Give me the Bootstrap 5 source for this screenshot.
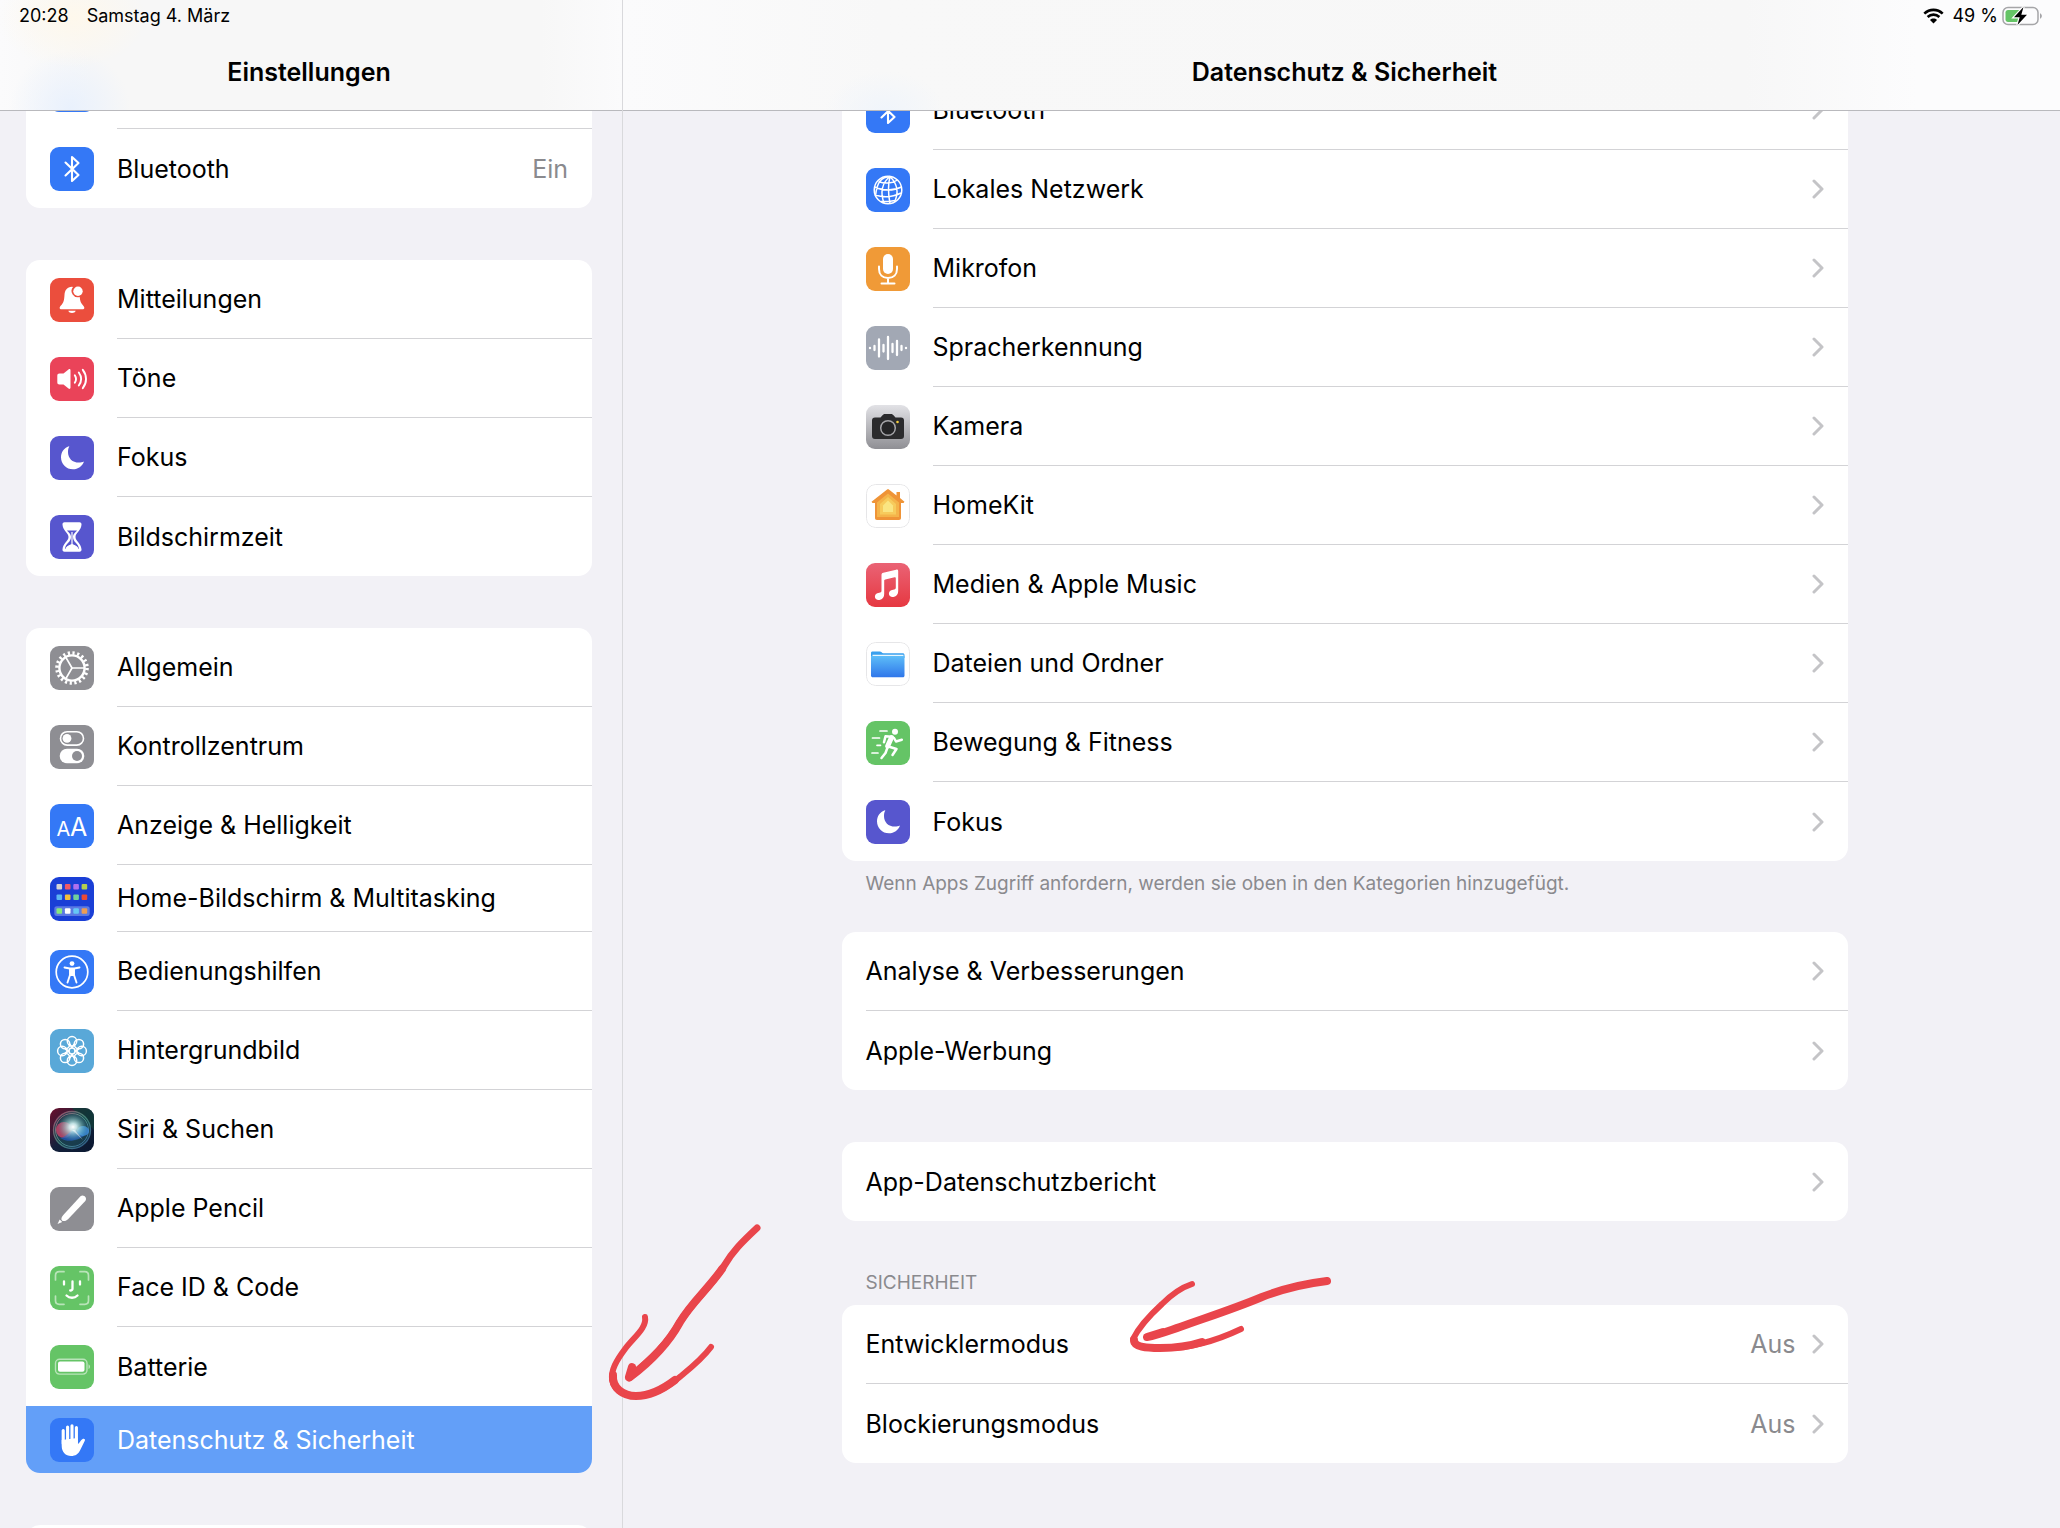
<!DOCTYPE html>
<html lang="de">
<head>
<meta charset="utf-8">
<meta name="viewport" content="width=device-width, initial-scale=1">
<title>Einstellungen – Datenschutz &amp; Sicherheit</title>
<link href="https://cdn.jsdelivr.net/npm/bootstrap@5.3.0/dist/css/bootstrap.min.css" rel="stylesheet">
<style>
  :root { --pane: #f2f1f6; --line: #d3d3d6; --muted: #8a8a8e; }
  body { font-family: Inter, "Liberation Sans", sans-serif; font-size: 25px; line-height: 32px; color: #000; background: var(--pane); }
  .app { min-height: 100vh; height: 100vh; }
  .sidebar { flex: 0 0 623px; border-right: 1px solid #d9d9dc; }
  .topbar { height: 111px; border-bottom: 1px solid #b9b9bd; flex: none; }
  .topbar h1 { font-size: 25px; line-height: 32px; font-weight: 600; margin: 0; }
  .status { height: 32px; font-size: 18px; line-height: 24px; }
  .bar-side {
    padding: 0 30px 0 26px;
    background:
      radial-gradient(ellipse 75px 50px at 72px 18px, #fef8ec, transparent),
      radial-gradient(ellipse 60px 58px at 70px 108px, #e9f1fd, transparent),
      linear-gradient(90deg, #fbfbfc, #f7f7f7 90px, #f7f7f7 540px, #fbfbfc);
  }
  .bar-side .status { margin-left: -7px; gap: 18px; }
  .bar-detail {
    padding-left: 6px;
    background:
      radial-gradient(ellipse 60px 40px at 262px 111px, #f0f5fb, transparent),
      linear-gradient(90deg, #fbfbfc, #f8f8f8 18%, #f7f7f7 78%, #fcfcfd 90%);
  }
  .bar-detail .status { padding-right: 17px; }
  .scroller { overflow: hidden; min-height: 0; }
  .side-list { margin-top: -61px; padding: 0 30px 0 26px; }
  .detail-list { margin-top: -40px; padding-left: 6px; }
  .detail-list > div { width: 100%; max-width: 1006px; }
  .settings-group { border-radius: 14px; overflow: hidden; background: #fff; margin-bottom: 52px; }
  .entry { display: flex; align-items: stretch; height: 79px; padding-left: 24px; color: #000; text-decoration: none; }
  .entry.short { height: 67px; }
  .entry > svg { width: 44px; height: 44px; border-radius: 9px; flex: none; align-self: center; margin-right: 23px; }
  .entry-body { flex: 1; display: flex; align-items: center; padding-right: 24px; border-bottom: 1px solid var(--line); min-width: 0; }
  .entry:last-child .entry-body { border-bottom: 0; }
  .no-line .entry-body { border-bottom: 0; }
  .entry-value { margin-left: auto; color: var(--muted); }
  .chev { width: 12px; height: 20px; flex: none; margin-left: auto; fill: none; stroke: #c4c4c7; stroke-width: 3; stroke-linecap: round; stroke-linejoin: round; }
  .entry-value + .chev { margin-left: 16px; }
  .entry.current { background: #639ff8; color: #fff; }
  .note { color: var(--muted); font-size: 19px; line-height: 24px; padding-left: 24px; margin: 0; }
  .after-group { margin-top: -41px; margin-bottom: 36px; }
  .group-title { margin-top: -2px; margin-bottom: 10px; }
  .ink { position: absolute; fill: none; stroke: #e9454b; stroke-linecap: round; stroke-linejoin: round; pointer-events: none; }
  .ink-side { left: 600px; top: 1215px; }
  .ink-detail { left: 1120px; top: 1265px; }
</style>
<script src="https://cdn.jsdelivr.net/npm/bootstrap@5.3.0/dist/js/bootstrap.bundle.min.js"></script>
</head>
<body>
<svg width="0" height="0" class="position-absolute" aria-hidden="true">
  <defs>
    <linearGradient id="gCam" x1="0" y1="0" x2="0" y2="1"><stop offset="0" stop-color="#e2e2e6"/><stop offset="1" stop-color="#8f8f94"/></linearGradient>
    <linearGradient id="gMusic" x1="0" y1="0" x2="0" y2="1"><stop offset="0" stop-color="#ea6375"/><stop offset="1" stop-color="#e63841"/></linearGradient>
    <linearGradient id="gFolder" x1="0" y1="0" x2="0" y2="1"><stop offset="0" stop-color="#5dbdf8"/><stop offset="1" stop-color="#2f76ea"/></linearGradient>
    <linearGradient id="gSiriBg" x1="0" y1="0" x2="1" y2="1"><stop offset="0" stop-color="#6d0f2c"/><stop offset=".5" stop-color="#14213c"/><stop offset="1" stop-color="#0a1830"/></linearGradient>
    <linearGradient id="gSiriRing" x1="0" y1="0" x2="1" y2="1"><stop offset="0" stop-color="#c7577b"/><stop offset=".5" stop-color="#5aa893"/><stop offset="1" stop-color="#3a70b8"/></linearGradient>
    <radialGradient id="gSiriGlow"><stop offset="0" stop-color="#fff"/><stop offset=".25" stop-color="#d4f4f4" stop-opacity=".9"/><stop offset="1" stop-color="#4fb9b0" stop-opacity="0"/></radialGradient>
    <symbol id="chev" viewBox="0 0 12 20"><path d="M2 2l8 8-8 8"/></symbol>
    <symbol id="bt" viewBox="0 0 44 44"><rect width="44" height="44" fill="#3478f6"/><path d="M15.500 15.500L28.500 28l-6.500 6V10l6.500 6-13 12.500" fill="none" stroke="#fff" stroke-width="2.100" stroke-linejoin="round" stroke-linecap="round"/></symbol>
    <symbol id="moon" viewBox="0 0 44 44"><rect width="44" height="44" fill="#5756ce"/><path d="M19 10.200C13.800 11.800 11 16.300 11 21.200 11 27.800 16.200 33.300 23 33.300c5 0 9.300-3 11-7.800-1.500.800-3.300 1.100-5 1.100-6.700 0-11-4.300-11-10.600 0-2.200.300-4.200 1.300-5.600z" fill="#fff"/></symbol>
  </defs>
</svg>

<div class="app d-flex position-relative overflow-hidden">

  <nav class="sidebar d-flex flex-column" aria-label="Einstellungen">
    <header class="topbar bar-side">
      <div class="status d-flex align-items-center"><span>20:28</span><span>Samstag 4. März</span></div>
      <h1 class="text-center mt-4">Einstellungen</h1>
    </header>
    <div class="scroller flex-grow-1">
      <div class="side-list">
        <div class="settings-group">
          <a class="entry" href="#" aria-label="WLAN"><svg viewBox="0 0 44 44"><rect width="44" height="44" fill="#3478f6"/></svg><span class="entry-body"></span></a>
          <a class="entry" href="#"><svg><use href="#bt"/></svg><span class="entry-body">Bluetooth<span class="entry-value">Ein</span></span></a>
        </div>

        <div class="settings-group">
          <a class="entry" href="#"><svg viewBox="0 0 44 44"><rect width="44" height="44" fill="#eb4e3d"/><path d="M22 8.700c-5 0-7.200 3.800-7.500 8-.4 5.800-.8 8-3.800 11-1.700 1.800-1.200 3.600.8 3.600h21c2 0 2.500-1.800.8-3.600-2.500-2.500-3.200-4.700-3.600-8.700A6.300 6.300 0 0 1 23 9z" fill="#fff"/><circle cx="28" cy="13.300" r="4.700" fill="#fff"/><path d="M18.300 32.700h7.400c-.8 3-6.600 3-7.400 0z" fill="#fff"/></svg><span class="entry-body">Mitteilungen</span></a>
          <a class="entry" href="#"><svg viewBox="0 0 44 44"><rect width="44" height="44" fill="#ea4359"/><path d="M9.500 16.500h4l5-4c1-.8 2-.3 2 1v17c0 1.300-1 1.800-2 1l-5-4h-4c-1.500 0-2.200-.8-2.200-2.200v-6.600c0-1.400.7-2.200 2.200-2.200z" fill="#fff"/><path d="M24.800 18.200c1.500 2.300 1.500 5.300 0 7.600M28.800 15.500c2.900 4 2.900 9 0 13M32.800 12.800c4.300 5.600 4.300 12.800 0 18.400" fill="none" stroke="#fff" stroke-width="1.900" stroke-linecap="round"/></svg><span class="entry-body">Töne</span></a>
          <a class="entry" href="#"><svg><use href="#moon"/></svg><span class="entry-body">Fokus</span></a>
          <a class="entry" href="#"><svg viewBox="0 0 44 44"><rect width="44" height="44" fill="#5756ce"/><path d="M14.500 7.300h15c1.400 0 2.200 1 2 2.500-.6 6.200-6 8.200-6 12.200s5.400 6 6 12.200c.2 1.500-.6 2.500-2 2.500h-15c-1.400 0-2.200-1-2-2.500.6-6.200 6-8.200 6-12.200s-5.400-6-6-12.200c-.2-1.500.6-2.500 2-2.500z" fill="#fff"/><path d="M17 15.500h10c-1.300 1.700-4 3.200-4 6.500 0 5.500 5.500 6 6 12H15c.5-6 6-6.500 6-12 0-3.300-2.700-4.800-4-6.500z" fill="#5756ce"/><path d="M22 17v15M16 34c.8-3 4-3.800 6-4.500 2 .7 5.200 1.500 6 4.500z" fill="#fff" stroke="#fff" stroke-width="1.200"/></svg><span class="entry-body">Bildschirmzeit</span></a>
        </div>

        <div class="settings-group">
          <a class="entry" href="#"><svg viewBox="0 0 44 44"><rect width="44" height="44" fill="#8e8e93"/><g fill="none" stroke="#fff"><circle cx="22" cy="22" r="12.600" stroke-width="2.400"/><circle cx="22" cy="22" r="15" stroke-width="3.600" stroke-dasharray="2.200 2.512"/><path d="M22 22h12M22 22l-6-10.400M22 22l-6 10.400" stroke-width="1.700"/></g></svg><span class="entry-body">Allgemein</span></a>
          <a class="entry" href="#"><svg viewBox="0 0 44 44"><rect width="44" height="44" fill="#8e8e93"/><rect x="10.500" y="6.700" width="23" height="13.400" rx="6.700" fill="none" stroke="#fff" stroke-width="1.600"/><circle cx="17" cy="13.400" r="4.400" fill="#fff"/><rect x="9.700" y="23.700" width="24.600" height="14.600" rx="7.300" fill="#fff"/><circle cx="27" cy="31" r="5" fill="#8e8e93"/></svg><span class="entry-body">Kontrollzentrum</span></a>
          <a class="entry" href="#"><svg viewBox="0 0 44 44"><rect width="44" height="44" fill="#3478f6"/><text x="6.500" y="31.500" font-size="20" fill="#fff">A</text><text x="20" y="31.500" font-size="25" fill="#fff">A</text></svg><span class="entry-body">Anzeige &amp; Helligkeit</span></a>
          <a class="entry short" href="#"><svg viewBox="0 0 44 44"><rect width="44" height="44" fill="#1a3fd6"/><rect x="4.300" y="29.300" width="35.400" height="9.600" rx="2.500" fill="#5b79e3"/><g><rect x="6.500" y="7" width="5.600" height="5.600" rx="1" fill="#d5d5d5"/><rect x="14.900" y="7" width="5.600" height="5.600" rx="1" fill="#ef5a66"/><rect x="23.300" y="7" width="5.600" height="5.600" rx="1" fill="#b070ee"/><rect x="31.600" y="7" width="5.600" height="5.600" rx="1" fill="#b5cf4f"/><rect x="6.500" y="17.500" width="5.600" height="5.600" rx="1" fill="#5cb6f2"/><rect x="14.900" y="17.500" width="5.600" height="5.600" rx="1" fill="#f3bf3c"/><rect x="23.300" y="17.500" width="5.600" height="5.600" rx="1" fill="#6fd09c"/><rect x="31.600" y="17.500" width="5.600" height="5.600" rx="1" fill="#ea4a36"/><rect x="6.500" y="31.200" width="5.600" height="5.600" rx="1" fill="#86e87e"/><rect x="14.900" y="31.200" width="5.600" height="5.600" rx="1" fill="#fff"/><rect x="23.300" y="31.200" width="5.600" height="5.600" rx="1" fill="#66c7f5"/><rect x="31.600" y="31.200" width="5.600" height="5.600" rx="1" fill="#ee9c52"/></g></svg><span class="entry-body">Home-Bildschirm &amp; Multitasking</span></a>
          <a class="entry" href="#"><svg viewBox="0 0 44 44"><rect width="44" height="44" fill="#3478f6"/><circle cx="22" cy="22" r="15.800" fill="none" stroke="#fff" stroke-width="1.700"/><circle cx="22" cy="13.600" r="2.400" fill="#fff"/><path d="M14.500 17.500l5.200 1h4.600l5.200-1M20 18.500v6.500l-2.500 7.500M24 18.500v6.500l2.500 7.500" fill="none" stroke="#fff" stroke-width="1.900" stroke-linecap="round" stroke-linejoin="round"/><path d="M19.500 18h5v8h-5z" fill="#fff"/></svg><span class="entry-body">Bedienungshilfen</span></a>
          <a class="entry" href="#"><svg viewBox="0 0 44 44"><rect width="44" height="44" fill="#59a8d8"/><g fill="none" stroke="#fff" stroke-width="1.500"><circle cx="22" cy="12.300" r="4.700"/><circle cx="28.900" cy="15.100" r="4.700"/><circle cx="31.700" cy="22" r="4.700"/><circle cx="28.900" cy="28.900" r="4.700"/><circle cx="22" cy="31.700" r="4.700"/><circle cx="15.100" cy="28.900" r="4.700"/><circle cx="12.300" cy="22" r="4.700"/><circle cx="15.100" cy="15.100" r="4.700"/><circle cx="22" cy="22" r="3"/><path d="M22 19l-2-4M22 19l2-4M22 25l-2 4M22 25l2 4M19 22l-4-2M19 22l-4 2M25 22l4-2M25 22l4 2"/></g></svg><span class="entry-body">Hintergrundbild</span></a>
          <a class="entry" href="#"><svg viewBox="0 0 44 44"><rect width="44" height="44" fill="url(#gSiriBg)"/><path d="M22 0h22v22z" fill="#113c38" opacity=".8"/><circle cx="22" cy="22" r="18.500" fill="#1d4a58" opacity=".7" stroke="url(#gSiriRing)" stroke-width="1.300"/><circle cx="22" cy="22" r="16.500" fill="none" stroke="url(#gSiriRing)" stroke-width=".8"/><ellipse cx="14" cy="22" rx="8" ry="8" fill="#d8446c" opacity=".75"/><path d="M10 30c5 0 9-6 13-8 5 0 8 2 11 6-5 3-14 8-24 2z" fill="#2458c0" opacity=".7"/><ellipse cx="33" cy="23" rx="6" ry="5" fill="#3f8fe0" opacity=".8"/><ellipse cx="23" cy="19" rx="15" ry="14" fill="url(#gSiriGlow)"/><path d="M22 22l11 10-8-10z" fill="#fff" opacity=".5"/></svg><span class="entry-body">Siri &amp; Suchen</span></a>
          <a class="entry" href="#"><svg viewBox="0 0 44 44"><rect width="44" height="44" fill="#8e8e93"/><path d="M30.500 9.200c3-2.200 7.200 1.500 4.800 4.700L18 32.200c-2 1.800-4.800 2.500-6 1.300-1.200-1.200-.5-3.500 1.300-5.500z" fill="#fff"/><path d="M9.700 32.500l2.500 2.600-4.700 2z" fill="#fff"/></svg><span class="entry-body">Apple Pencil</span></a>
          <a class="entry" href="#"><svg viewBox="0 0 44 44"><rect width="44" height="44" fill="#65c466"/><path d="M5.500 14V9.500c0-2.500 1.300-3.800 3.800-3.800H14M30 5.700h4.700c2.500 0 3.800 1.300 3.800 3.800V14M38.500 30v4.500c0 2.500-1.300 3.800-3.800 3.800H30M14 38.300H9.300c-2.500 0-3.800-1.300-3.800-3.800V30" fill="none" stroke="#b9e4b9" stroke-width="1.700" stroke-linecap="round"/><path d="M14 15.500v3M30 15.500v3M22.500 15.500v7c0 1.500-.8 2-2.300 2M16.500 29.500c3 3 8 3 11 0" fill="none" stroke="#fff" stroke-width="2.300" stroke-linecap="round"/></svg><span class="entry-body">Face ID &amp; Code</span></a>
          <a class="entry no-line" href="#"><svg viewBox="0 0 44 44"><rect width="44" height="44" fill="#65c466"/><rect x="5.500" y="14.300" width="31.500" height="14.800" rx="4" fill="none" stroke="#b9e4b9" stroke-width="1.400"/><rect x="8" y="16.600" width="26.500" height="10.200" rx="2" fill="#fff"/><path d="M38.500 19.300c2 .8 2 4 0 4.800z" fill="#b9e4b9"/></svg><span class="entry-body">Batterie</span></a>
          <a class="entry short current" href="#" aria-current="page"><svg viewBox="0 0 44 44"><rect width="44" height="44" fill="#3478f6"/><path d="M13.200 12.500v13M17.600 9v14M22 7.700v15M26.400 9.500v15" stroke="#fff" stroke-width="3.100" stroke-linecap="round"/><path d="M11.700 22v6c0 6 4 10 9.300 10 4.500 0 7.500-2 9.500-6.500l4.300-8.800c.7-1.600-.8-2.700-2.500-1.500-1.800 1.300-2.800 3.500-4.300 4.800L27.500 20z" fill="#fff"/></svg><span class="entry-body">Datenschutz &amp; Sicherheit</span></a>
        </div>
        <div class="settings-group mb-0"><a class="entry" href="#" aria-label="App Store"><span class="entry-body"></span></a></div>
      </div>
    </div>
  </nav>

  <main class="flex-grow-1 d-flex flex-column">
    <header class="topbar bar-detail">
      <div class="status d-flex align-items-center justify-content-end">
        <svg class="me-2" width="21" height="16" viewBox="0 0 21 16" aria-label="WLAN"><path d="M1.300 5.600c5.300-5 13.100-5 18.400 0M4.600 9c3.400-3.200 8.400-3.200 11.800 0" fill="none" stroke="#000" stroke-width="2.600"/><path d="M7 11.900c2-1.900 5-1.900 7 0L10.500 15.500z"/></svg>
        <span class="me-1">49 %</span>
        <svg width="41" height="20" viewBox="0 0 41 20" aria-label="Batterie lädt"><rect x="1" y="1.500" width="35" height="17" rx="5" fill="none" stroke="#a5a5a8" stroke-width="1.500"/><path d="M38 7.300c2.500 1 2.500 4.400 0 5.400z" fill="#a5a5a8"/><path d="M6 4h12v12H6c-1.500 0-2.500-1-2.500-2.500v-7C3.500 5 4.500 4 6 4z" fill="#65c466"/><path d="M21.500 1L12 11.300h5.700L15.500 19 25 8.700h-5.700z" fill="#000" stroke="#fff" stroke-width="2.400" paint-order="stroke"/></svg>
      </div>
      <h1 class="text-center mt-4">Datenschutz &amp; Sicherheit</h1>
    </header>
    <div class="scroller flex-grow-1">
      <div class="detail-list d-flex flex-column align-items-center">
        <div class="settings-group">
          <a class="entry" href="#"><svg><use href="#bt"/></svg><span class="entry-body">Bluetooth<svg class="chev"><use href="#chev"/></svg></span></a>
          <a class="entry" href="#"><svg viewBox="0 0 44 44"><rect width="44" height="44" fill="#3478f6"/><g fill="none" stroke="#fff" stroke-width="1.500"><circle cx="22" cy="22" r="13.800"/><path d="M24 8.500c-8 6-10 16-6 26.500M24 8.500c-2 8-2 17 0 27M24 8.500c7 7 9 16 4.500 25.500M24 8.500C16 9 11 13 9.500 28M12.500 13.500c6 2.500 14 2 19-1.500M8.500 19c8 4 19 4 27 0M9 27c8 2.500 18 2 26-2M15 33.500c5 .3 10 0 14-1"/></g></svg><span class="entry-body">Lokales Netzwerk<svg class="chev"><use href="#chev"/></svg></span></a>
          <a class="entry" href="#"><svg viewBox="0 0 44 44"><rect width="44" height="44" fill="#f09a37"/><rect x="17" y="7" width="10" height="20" rx="5" fill="#fff"/><path d="M13 19.500V22c0 5.500 3.500 9 9 9s9-3.500 9-9v-2.500M22 31v5.500M15.500 36.500h13" fill="none" stroke="#fff" stroke-width="2" stroke-linecap="round"/></svg><span class="entry-body">Mikrofon<svg class="chev"><use href="#chev"/></svg></span></a>
          <a class="entry" href="#"><svg viewBox="0 0 44 44"><rect width="44" height="44" fill="#a2a8b4"/><path d="M4 21.800v.4M8.500 20v4M13 13.500v17M17.500 19v6.500M22 11v22M26.500 18v8M31 15v14M35.500 20v4M40 21.800v.4" stroke="#fff" stroke-width="2.300" stroke-linecap="round"/></svg><span class="entry-body">Spracherkennung<svg class="chev"><use href="#chev"/></svg></span></a>
          <a class="entry" href="#"><svg viewBox="0 0 44 44"><rect width="44" height="44" fill="url(#gCam)"/><path d="M9 12.500h5.500l2.500-2.700c.6-.6 1-.8 2-.8h6c1 0 1.400.2 2 .8l2.500 2.700H35c2 0 3 1 3 3V31c0 2-1 3-3 3H9c-2 0-3-1-3-3V15.500c0-2 1-3 3-3z" fill="#2b2b2d"/><circle cx="22" cy="23" r="7.300" fill="#242426" stroke="#a3a3a7" stroke-width="1.500"/><circle cx="31.500" cy="17" r="1.300" fill="#f5ce3e"/></svg><span class="entry-body">Kamera<svg class="chev"><use href="#chev"/></svg></span></a>
          <a class="entry" href="#"><svg viewBox="0 0 44 44"><rect x=".5" y=".5" width="43" height="43" rx="9" fill="#fff" stroke="#e6e6e8"/><path d="M30.500 8h3.500v6l4.500 3.800-1 1.200H35v15c0 1.300-.7 2-2 2H11c-1.300 0-2-.7-2-2V19H6.500l-1-1.200L20.800 5.700c.8-.6 1.600-.6 2.400 0l7.300 5.700z" fill="#ef9437"/><path d="M22 9.500l11 9V33H11V18.500z" fill="#f4b44a"/><path d="M22 13l8 7v10.500H14V20z" fill="#f7cb5c"/><path d="M22 16.500l5 5V28H17v-6.500z" fill="#fae582"/></svg><span class="entry-body">HomeKit<svg class="chev"><use href="#chev"/></svg></span></a>
          <a class="entry" href="#"><svg viewBox="0 0 44 44"><rect width="44" height="44" fill="url(#gMusic)"/><path d="M15.500 12c0-1.400.5-2 1.800-2.300l12.800-3c1.400-.3 2.100.2 2.100 1.600V28c0 3.300-1.700 5.500-4.700 5.900-2.700.4-4.600-1-4.600-3.100 0-2.300 1.500-3.500 4.200-4 2-.4 2.700-.8 2.700-2.300V15.200c0-.8-.4-1.100-1.200-.9l-9.300 2.100c-.8.200-1.100.5-1.100 1.400V31c0 3.300-1.700 5.500-4.700 5.900-2.700.4-4.600-1-4.600-3.100 0-2.300 1.500-3.500 4.200-4 2-.4 2.400-.8 2.400-2.300z" fill="#fff"/></svg><span class="entry-body">Medien &amp; Apple Music<svg class="chev"><use href="#chev"/></svg></span></a>
          <a class="entry" href="#"><svg viewBox="0 0 44 44"><rect x=".5" y=".5" width="43" height="43" rx="9" fill="#fff" stroke="#e6e6e8"/><path d="M5 11c0-1 .6-1.500 1.600-1.500h7.200c1.700 0 2 1.700 3.700 1.700h19.200c1 0 1.800.6 1.800 1.700V16H5z" fill="#3aa0ee"/><path d="M6.500 12.700h31v2h-31z" fill="#e8f6fe"/><path d="M5 14h33.500v19.500c0 1-.7 1.800-1.800 1.800H6.800c-1 0-1.800-.7-1.800-1.800z" fill="url(#gFolder)"/></svg><span class="entry-body">Dateien und Ordner<svg class="chev"><use href="#chev"/></svg></span></a>
          <a class="entry" href="#"><svg viewBox="0 0 44 44"><rect width="44" height="44" fill="#65c466"/><circle cx="29" cy="10.700" r="3" fill="#fff"/><g fill="none" stroke="#fff" stroke-linecap="round" stroke-linejoin="round"><path d="M25.500 16.500l-3.800 8.500" stroke-width="5"/><path d="M25.500 15.800l-6-.5-1.500 6M28 17l2 3.500 5.800-1.800M24 26l6.500 2-4 6M21.500 26.500L19.500 32l-4 5" stroke-width="2.500"/><path d="M14 10h7M6.500 17h7M11 24.300h3.500M6 32h6" stroke-width="1.700"/></g></svg><span class="entry-body">Bewegung &amp; Fitness<svg class="chev"><use href="#chev"/></svg></span></a>
          <a class="entry" href="#"><svg><use href="#moon"/></svg><span class="entry-body">Fokus<svg class="chev"><use href="#chev"/></svg></span></a>
        </div>
        <div class="after-group"><p class="note">Wenn Apps Zugriff anfordern, werden sie oben in den Kategorien hinzugefügt.</p></div>

        <div class="settings-group">
          <a class="entry" href="#"><span class="entry-body">Analyse &amp; Verbesserungen<svg class="chev"><use href="#chev"/></svg></span></a>
          <a class="entry" href="#"><span class="entry-body">Apple-Werbung<svg class="chev"><use href="#chev"/></svg></span></a>
        </div>
        <div class="settings-group">
          <a class="entry" href="#"><span class="entry-body">App-Datenschutzbericht<svg class="chev"><use href="#chev"/></svg></span></a>
        </div>
        <div class="group-title"><h2 class="note text-uppercase fw-normal">Sicherheit</h2></div>
        <div class="settings-group">
          <a class="entry" href="#"><span class="entry-body">Entwicklermodus<span class="entry-value">Aus</span><svg class="chev"><use href="#chev"/></svg></span></a>
          <a class="entry" href="#"><span class="entry-body">Blockierungsmodus<span class="entry-value">Aus</span><svg class="chev"><use href="#chev"/></svg></span></a>
        </div>
      </div>
    </div>
  </main>

  <!-- Hand-drawn arrows lying over the panes -->
  <svg class="ink ink-side" width="170" height="190" viewBox="600 1215 170 190" aria-hidden="true">
    <path stroke-width="7" d="M757 1228C742 1242 732 1252 724 1266C710 1288 692 1302 680 1322C668 1344 650 1360 629 1378"/>
    <path stroke-width="8" d="M722 1269C708 1289 692 1302 680 1322C668 1344 650 1362 630 1377M632 1367L629 1377"/>
    <path stroke-width="6" d="M645 1317C647 1328 634 1337 625 1349C616 1361 611 1370 612 1380C614 1390 623 1396 636 1396C654 1396 668 1387 681 1376C692 1367 702 1359 711 1347"/>
    <path stroke-width="8" d="M613 1375C612 1388 623 1396 636 1396C650 1396 662 1390 675 1380"/>
  </svg>
  <svg class="ink ink-detail" width="220" height="95" viewBox="1120 1265 220 95" aria-hidden="true">
    <path stroke-width="8" d="M1327 1281C1302 1284 1280 1290 1262 1297C1236 1308 1208 1317 1180 1327C1168 1331 1158 1335 1147 1337L1163 1332"/>
    <path stroke-width="6" d="M1192 1284C1180 1288 1170 1296 1162 1304C1150 1315 1139 1327 1133 1339C1133 1346 1143 1348 1155 1348C1186 1350 1218 1340 1241 1329"/>
    <path stroke-width="8" d="M1134 1340C1134 1347 1146 1348 1160 1348C1176 1348 1190 1346 1202 1342"/>
  </svg>
</div>
</body>
</html>
